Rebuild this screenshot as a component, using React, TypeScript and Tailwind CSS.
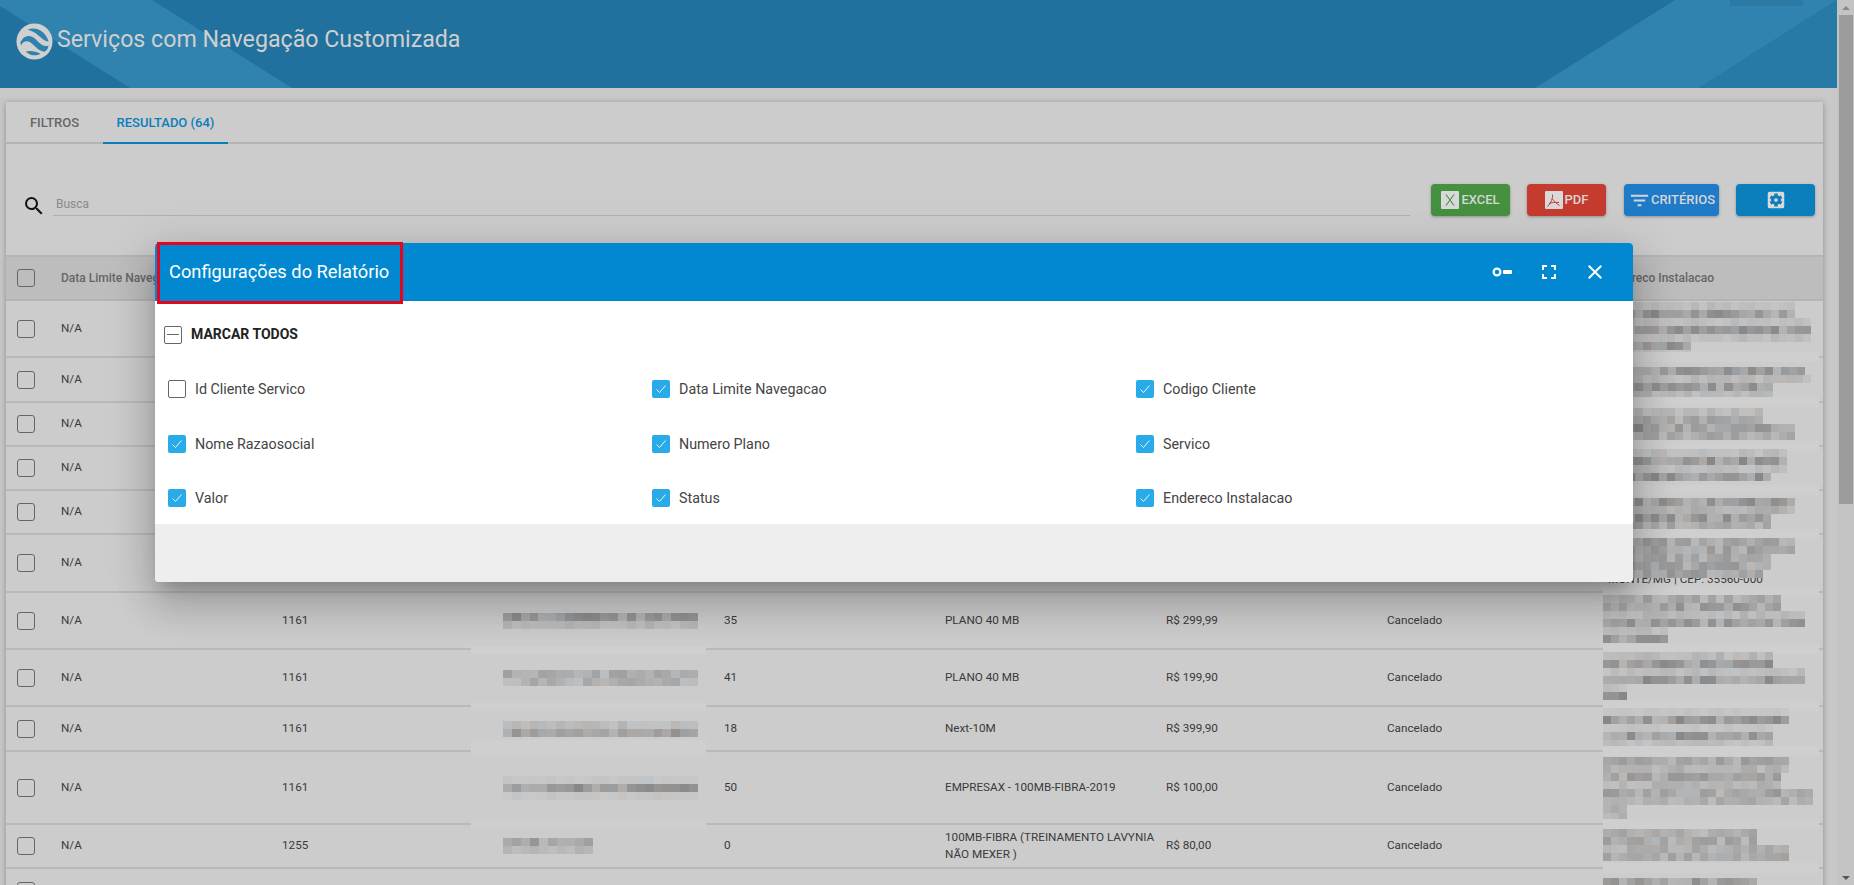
import { MdSearch, MdFilterList, MdSettingsApplications, MdFullscreen, MdClose } from "react-icons/md";

const font = "font-['Roboto',sans-serif]";

type MosaicLine = [number, number];

// redacted text in the report: each line is [width, how dark]
function Mosaic({ lines, seed, cell = 8 }: { lines: MosaicLine[]; seed: number; cell?: number }) {
    let s = seed;
    const next = () => {
        s = (s * 9301 + 49297) % 233280;
        return s / 233280;
    };
    return (
        <div className="flex flex-col">
            {lines.map(([width, dark], i) => {
                const n = Math.round(width / cell);
                return (
                    <div key={i} className="flex h-2" style={{ width }}>
                        {Array.from({ length: n }).map((_, j) => {
                            const v = Math.round(203 - dark * (22 + next() * 46));
                            const tint = Math.round(next() * 6 - 3);
                            return (
                                <div
                                    key={j}
                                    className="flex-1"
                                    style={{ backgroundColor: `rgb(${v + tint},${v},${v - tint})` }}
                                />
                            );
                        })}
                    </div>
                );
            })}
        </div>
    );
}

function Box() {
    return <div className="size-[18px] shrink-0 rounded-[3px] border-[1.5px] border-[#666666]" />;
}

function Check({ checked }: { checked: boolean }) {
    if (!checked) return <div className="size-[18px] shrink-0 rounded-[2px] border border-[#666666] bg-white" />;
    return (
        <div className="flex size-[18px] shrink-0 items-center justify-center rounded-[2px] bg-[#29abe9]">
            <svg width="14" height="14" viewBox="0 0 14 14" fill="none" stroke="#fff" strokeWidth="0.9">
                <path d="M2.5 7.5 L5.5 10.5 L11.5 3.5" />
            </svg>
        </div>
    );
}

function Option({ label, checked = true }: { label: string; checked?: boolean }) {
    return (
        <div className="flex w-[484px] items-center gap-[9px]">
            <Check checked={checked} />
            <span className="text-[14.3px] leading-5 text-[#444444]">{label}</span>
        </div>
    );
}

function HeaderArt() {
    return (
        <svg className="absolute inset-0 h-full w-full" viewBox="0 0 1837 88" preserveAspectRatio="none">
            <polygon points="0,0 152,0 292,88 130,88 0,6" fill="#3083ae" />
            <polygon points="1675,0 1837,0 1699,88 1535,88" fill="#3083ae" />
            <polygon points="1837,0 1837,88 1699,88" fill="#277aa5" />
            <rect x="1730" y="0" width="73" height="6" fill="#2a7aa3" />
        </svg>
    );
}

function Logo() {
    return (
        <svg width="37" height="37" viewBox="0 0 38 38" className="shrink-0">
            <circle cx="19" cy="19" r="18.5" fill="#d0d0d0" />
            <path d="M12 7 C19 3.5 30 7 33.5 19 C29 19 25 14 20 10.5 C17 8.5 14 7.5 12 7 Z" fill="#2f82ad" />
            <path d="M4.5 20 C8 12 15 11.5 20 16.5 C24 21 29 25.5 33.5 23 C33 26 31.5 28.5 29.5 29.5 C23 29 19 23 15 20 C11 17.5 7.5 19 5 23 Z" fill="#2f82ad" />
            <path d="M10 29.5 C14 28 20 29 25 31.5 C21 34 15 34 10 29.5 Z" fill="#2f82ad" />
        </svg>
    );
}

function ExcelIcon() {
    return (
        <div className="flex size-[18px] items-center justify-center rounded-[1px] bg-[#d9d9d9]">
            <svg width="12" height="14" viewBox="0 0 12 14" fill="none" stroke="#45913f" strokeWidth="1.1">
                <path d="M2 1.5 L10 12.5 M10 1.5 L2 12.5" />
            </svg>
        </div>
    );
}

function PdfIcon() {
    return (
        <div className="flex size-[18px] items-center justify-center rounded-[1px] bg-[#d9d9d9]">
            <svg width="15" height="15" viewBox="0 0 15 15" fill="none" stroke="#c63b30" strokeWidth="1">
                <path d="M6.5 1.5 C7 5 5 10 1.5 13.5 M6.5 6 C8 8.5 10.5 10.5 13.5 12.5 M3 10.5 C6 9.5 9 9 13 9.5" />
            </svg>
        </div>
    );
}

function KeyIcon() {
    return (
        <svg width="20" height="10" viewBox="0 0 20 10" fill="none">
            <circle cx="5" cy="5" r="3.4" stroke="#fff" strokeWidth="2.2" />
            <rect x="11" y="3" width="9" height="4" rx="1" fill="#fff" />
        </svg>
    );
}

type Row = {
    h: string;
    first?: string;
    code?: string;
    name?: { lines: MosaicLine[] };
    num?: string;
    plan?: string;
    price?: string;
    status?: string;
    addr: MosaicLine[];
    addrTop: string;
    addrText?: string;
    nameBand?: string;
};

const rows: Row[] = [
    { h: "h-[57px]", first: "N/A", addrTop: "top-[1px]", addr: [[192, 0.3], [192, 1], [208, 0.3], [208, 1], [208, 0.3], [88, 1], [88, 0.2]] },
    { h: "h-[45px]", first: "N/A", addrTop: "top-[9px]", addr: [[202, 1], [208, 0.4], [170, 1], [170, 0.4]] },
    { h: "h-[44px]", first: "N/A", addrTop: "top-[5px]", addr: [[160, 0.4], [160, 0.7], [192, 1], [192, 0.7]] },
    { h: "h-[44px]", first: "N/A", addrTop: "top-[2px]", addr: [[184, 0.3], [184, 1], [184, 0.3], [168, 1]] },
    { h: "h-[44px]", first: "N/A", addrTop: "top-[7px]", addr: [[192, 1], [192, 0.6], [168, 1], [168, 0.7]] },
    {
        h: "h-[58px]",
        first: "N/A",
        addrTop: "top-[3px]",
        addr: [[192, 0.8], [192, 0.8], [168, 0.8], [168, 0.8], [160, 0.8]],
        addrText: "MONTE/MG | CEP: 35560-000",
    },
    {
        h: "h-[57px]",
        first: "N/A",
        code: "1161",
        name: { lines: [[195, 1], [195, 0.35]] },
        num: "35",
        plan: "PLANO 40 MB",
        price: "R$ 299,99",
        status: "Cancelado",
        addrTop: "top-[2px]",
        addr: [[178, 0.7], [178, 0.9], [202, 0.4], [202, 0.9], [65, 0.3], [65, 1]],
        nameBand: "h-2",
    },
    {
        h: "h-[57px]",
        first: "N/A",
        code: "1161",
        name: { lines: [[195, 0.65], [195, 0.55]] },
        num: "41",
        plan: "PLANO 40 MB",
        price: "R$ 199,90",
        status: "Cancelado",
        addrTop: "top-[2px]",
        addr: [[170, 0.4], [170, 1], [202, 0.3], [202, 1], [24, 0.3], [24, 1]],
        nameBand: "h-2",
    },
    {
        h: "h-[45px]",
        first: "N/A",
        code: "1161",
        name: { lines: [[195, 0.35], [195, 0.95]] },
        num: "18",
        plan: "Next-10M",
        price: "R$ 399,90",
        status: "Cancelado",
        addrTop: "top-[1px]",
        addr: [[186, 0.15], [186, 1], [170, 0.15], [170, 1], [170, 0.3]],
        nameBand: "h-4",
    },
    {
        h: "h-[73px]",
        first: "N/A",
        code: "1161",
        name: { lines: [[195, 0.12], [195, 1], [195, 0.12]] },
        num: "50",
        plan: "EMPRESAX - 100MB-FIBRA-2019",
        price: "R$ 100,00",
        status: "Cancelado",
        addrTop: "top-[5px]",
        addr: [[186, 0.8], [186, 0.5], [178, 0.8], [178, 0.5], [210, 0.8], [210, 0.6], [24, 0.7], [24, 0.5]],
        nameBand: "h-2",
    },
    {
        h: "h-[44px]",
        first: "N/A",
        code: "1255",
        name: { lines: [[90, 0.8], [90, 0.4]] },
        num: "0",
        plan: "100MB-FIBRA (TREINAMENTO LAVYNIA NÃO MEXER )",
        price: "R$ 80,00",
        status: "Cancelado",
        addrTop: "top-[4px]",
        addr: [[154, 0.6], [154, 0.7], [186, 0.6], [186, 0.7]],
    },
    { h: "h-[46px]", addrTop: "top-[9px]", addr: [[154, 0.9]] },
];

const columns = ["Data Limite Navegacao", "Codigo Cliente", "Nome Razaosocial", "Numero Plano", "Servico", "Valor", "Status"];

const grid = "grid grid-cols-[55px_repeat(7,221px)_215px] items-center";

export default function App() {
    return (
        <div className={`${font} relative flex h-[885px] w-[1854px] overflow-hidden bg-[#c8c8c8] text-[11.7px] text-[#3a3a3a]`}>
            <div className="flex min-w-0 flex-1 flex-col">
                {/* Top bar */}
                <header className="relative flex h-[88px] shrink-0 items-center bg-[#20719d] pb-[6px] pl-[16px]">
                    <HeaderArt />
                    <div className="relative flex items-center gap-[4px]">
                        <Logo />
                        <h1 className="-mt-[4px] text-[23.2px] font-normal text-[#cfcfcf]">Serviços com Navegação Customizada</h1>
                    </div>
                </header>

                {/* Card */}
                <main className="mt-[14px] mr-[14px] ml-[6px] bg-[#cccccc] shadow-[0_1px_6px_rgba(0,0,0,0.3)]">
                    <div className="flex h-[42px] border-b-2 border-[#b4b4b4]">
                        <div className="flex w-[97px] items-center justify-center pt-[2px] text-[13px] font-medium text-[#666666]">FILTROS</div>
                        <div className="-mb-[2px] flex w-[125px] items-center justify-center border-b-[2px] border-[#0b7dbb] pt-[2px] text-[13px] font-medium text-[#0b7dbb]">
                            RESULTADO (64)
                        </div>
                    </div>

                    {/* Search and actions */}
                    <div className="flex h-[111px] items-start pt-[40px]">
                        <div className="mr-[21px] ml-[16px] flex flex-1 items-start gap-[7px]">
                            <MdSearch className="mt-[10px] shrink-0 text-[#111111]" size={24} />
                            <div className="flex h-8 flex-1 items-center border-b border-[#b0b0b0] pt-[9px] pl-[3px] text-[12px] text-[#8a8a8a]">Busca</div>
                        </div>
                        <div className="mr-[8px] flex gap-[17px] text-[13px] font-medium text-[#d6d6d6]">
                            <button className="flex h-8 w-[79px] items-center justify-center gap-[2px] rounded-[4px] bg-[#45913f] shadow-[0_1px_3px_rgba(0,0,0,0.3)]">
                                <ExcelIcon />
                                EXCEL
                            </button>
                            <button className="flex h-8 w-[79px] items-center justify-center gap-[2px] rounded-[4px] bg-[#c63b30] shadow-[0_1px_3px_rgba(0,0,0,0.3)]">
                                <PdfIcon />
                                PDF
                            </button>
                            <button className="ml-px flex h-8 w-[95px] items-center justify-center rounded-[4px] bg-[#1f7ac8] shadow-[0_1px_3px_rgba(0,0,0,0.3)]">
                                <MdFilterList size={23} />
                                CRITÉRIOS
                            </button>
                            <button className="flex h-8 w-[79px] items-center justify-center rounded-[4px] bg-[#0b7fbc] shadow-[0_1px_3px_rgba(0,0,0,0.3)]">
                                <MdSettingsApplications size={22} className="text-[#d9d9d9]" />
                            </button>
                        </div>
                    </div>

                    {/* Table */}
                    <div className={`${grid} h-[46px] border-y-2 border-[#b4b4b4] bg-[#bdbdbd] text-[12px] font-medium text-[#666666]`}>
                        <div className="pl-[11px]">
                            <Box />
                        </div>
                        {columns.map((c) => (
                            <div key={c}>{c}</div>
                        ))}
                        <div className="-ml-[3px]">Endereco Instalacao</div>
                    </div>
                    {rows.map((row, i) => (
                        <div key={i} className={`${grid} ${row.h} border-b-2 border-[#b9b9b9]`}>
                            <div className="pl-[11px]">
                                <Box />
                            </div>
                            <div>{row.first}</div>
                            <div>{row.code}</div>
                            <div className="relative self-stretch">
                                {row.name && (
                                    <div className="flex h-full items-center">
                                        <Mosaic lines={row.name.lines} seed={i * 37 + 11} cell={9} />
                                    </div>
                                )}
                                {row.nameBand && <div className={`absolute -bottom-[6px] -left-[32px] w-[235px] bg-[#cfcfcf] ${row.nameBand}`} />}
                            </div>
                            <div>{row.num}</div>
                            <div className="leading-[17px]">{row.plan}</div>
                            <div>{row.price}</div>
                            <div>{row.status}</div>
                            <div className="relative self-stretch">
                                {row.addrText && <div className="absolute bottom-[3px] left-0 whitespace-nowrap leading-[17px]">{row.addrText}</div>}
                                <div className={`absolute -left-[5px] ${row.addrTop}`}>
                                    <Mosaic lines={row.addr} seed={i * 53 + 7} />
                                </div>
                                <div className="absolute -bottom-[6px] -left-[5px] h-2.5 w-[216px] bg-[#cfcfcf]" />
                            </div>
                        </div>
                    ))}
                </main>
            </div>

            {/* Scrollbar */}
            <div className="flex w-[17px] shrink-0 flex-col items-center bg-[#c4c4c4]">
                <div className="flex h-[15px] items-center justify-center">
                    <div className="h-0 w-0 border-x-[4px] border-b-[4px] border-x-transparent border-b-[#8a8a8a]" />
                </div>
                <div className="h-[489px] w-[14px] bg-[#9c9c9c]" />
                <div className="mt-auto flex h-[15px] items-center justify-center">
                    <div className="h-0 w-0 border-x-[4px] border-t-[4px] border-x-transparent border-t-[#555555]" />
                </div>
            </div>

            {/* Report settings dialog */}
            <div className="absolute top-[243px] left-[155px] flex h-[339px] w-[1478px] flex-col rounded-[4px] bg-white shadow-[0_11px_15px_-7px_rgba(0,0,0,0.2),0_24px_38px_3px_rgba(0,0,0,0.14),0_9px_46px_8px_rgba(0,0,0,0.12)]">
                <div className="flex h-[58px] shrink-0 items-center justify-between rounded-t-[4px] bg-[#0288d1] pr-[26px] pl-[14px] text-white">
                    <h2 className="text-[18.3px] leading-6 font-normal">Configurações do Relatório</h2>
                    <div className="flex items-center gap-[25px]">
                        <KeyIcon />
                        <div className="flex items-center gap-[22px]">
                            <MdFullscreen size={24} />
                            <MdClose size={24} />
                        </div>
                    </div>
                </div>
                <div className="flex-1 pl-[9px]">
                    <div className="mt-[23px] flex items-center gap-[9px]">
                        <div className="flex size-[18px] items-center justify-center rounded-[2px] border border-[#666666]">
                            <div className="h-px w-[12px] bg-[#666666]" />
                        </div>
                        <span className="text-[14px] font-bold text-[#222222]">MARCAR TODOS</span>
                    </div>
                    <div className="mt-[34px] flex flex-wrap gap-y-[34.5px] pl-[4px]">
                        <Option label="Id Cliente Servico" checked={false} />
                        <Option label="Data Limite Navegacao" />
                        <Option label="Codigo Cliente" />
                        <Option label="Nome Razaosocial" />
                        <Option label="Numero Plano" />
                        <Option label="Servico" />
                        <Option label="Valor" />
                        <Option label="Status" />
                        <Option label="Endereco Instalacao" />
                    </div>
                </div>
                <div className="h-[58px] shrink-0 rounded-b-[4px] bg-[#eeeeee]" />
                {/* red highlight drawn over the title in the picture */}
                <div className="absolute -top-px left-[2px] h-[62px] w-[246px] border-[3px] border-[#e8041c]" />
            </div>
        </div>
    );
}
